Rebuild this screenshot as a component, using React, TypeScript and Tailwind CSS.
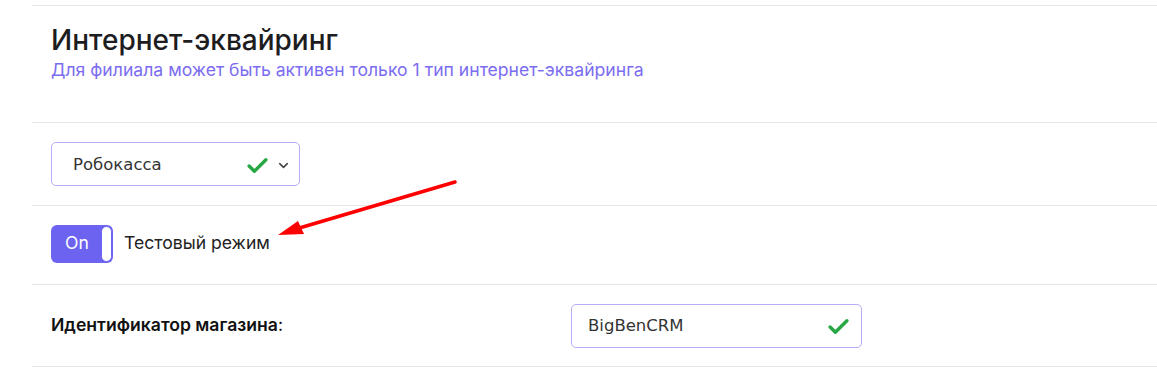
import { ChevronDown } from 'lucide-react'

function Check({ className = '' }: { className?: string }) {
  return (
    <svg viewBox="0 0 20 16" className={className} fill="none">
      <path d="M2 8.5l5 5L18 2.5" stroke="#28a745" strokeWidth="3.2" strokeLinecap="round" strokeLinejoin="round" />
    </svg>
  )
}

export default function App() {
  return (
    <div className="relative h-[381px] w-[1157px] overflow-hidden bg-white pl-8 pt-[5px] font-['Inter',sans-serif]">
      {/* Header */}
      <div className="h-[117px] border-t border-[#e6e6e6] pl-[19px] pt-[16px]">
        <h2 className="text-[28px] font-medium leading-[36px] text-[#1d1d1f]">Интернет-эквайринг</h2>
        <p className="text-[17.6px] leading-[24px] text-[#7b6cf0]">
          Для филиала может быть активен только 1 тип интернет-эквайринга
        </p>
      </div>

      {/* Provider select */}
      <div className="flex h-[83px] items-center border-t border-[#e6e6e6] pl-[19px]">
        <div className="flex h-[44px] w-[249px] items-center rounded-[5px] border border-[#b4aef2] pl-[21px] pr-[8px] pt-[2px]">
          <span className="flex-1 font-['DejaVu_Sans',sans-serif] text-[16.5px] text-[#333]">Робокасса</span>
          <Check className="mr-[8px] h-[17px] w-[21px]" />
          <ChevronDown className="h-[15px] w-[15px] text-[#444]" strokeWidth={2.5} />
        </div>
      </div>

      {/* Test mode toggle */}
      <div className="flex h-[79px] items-center border-t border-[#e6e6e6] pl-[19px] pb-[3px]">
        <div className="flex h-[38px] w-[62px] items-center rounded-[6px] bg-[#6c63f0] pl-[14px] pr-[1px]">
          <span className="flex-1 text-[17.6px] text-white">On</span>
          <span className="h-[36px] w-[11px] rounded-full border border-[#6c63f0] bg-white" />
        </div>
        <span className="ml-[11px] text-[17.6px] text-[#222]">Тестовый режим</span>
      </div>

      {/* Shop id */}
      <div className="grid h-[83px] grid-cols-[520px_291px] items-center border-t border-b border-[#e6e6e6] pl-[19px]">
        <div className="text-[17.6px] text-[#111]">
          <span className="font-semibold">Идентификатор магазина</span>:
        </div>
        <div className="flex h-[44px] items-center rounded-[5px] border border-[#b4aef2] pl-[16px] pr-[12px] pt-[2px]">
          <span className="flex-1 font-['DejaVu_Sans',sans-serif] text-[16.5px] text-[#333]">BigBenCRM</span>
          <Check className="h-[17px] w-[21px]" />
        </div>
      </div>

      {/* Annotation arrow */}
      <svg className="pointer-events-none absolute left-0 top-0" width="1157" height="381">
        <line x1="455" y1="182" x2="296" y2="229" stroke="#f00" strokeWidth="3.5" strokeLinecap="round" />
        <polygon points="278,235 298,221 304,234" fill="#f00" />
      </svg>
    </div>
  )
}
